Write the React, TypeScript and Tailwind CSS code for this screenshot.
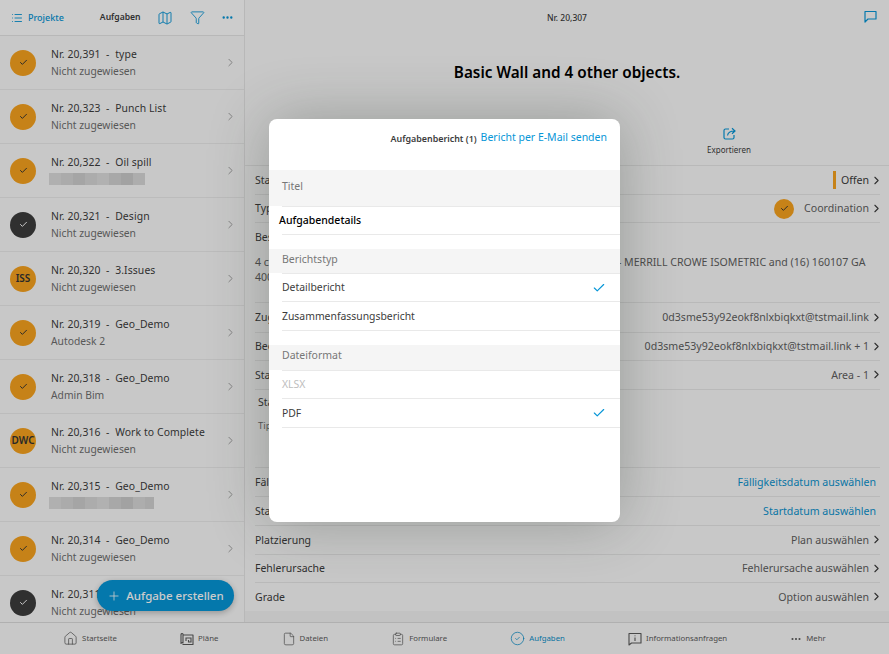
import React from "react";
import { ChevronRight, Check, House, File, ClipboardList, CircleCheck, Map, Funnel, Ellipsis, List, Plus } from "lucide-react";

const font = { fontFamily: '"Noto Sans", "Open Sans", sans-serif' };

type Task = { nr: string; name: string; sub?: string; badge: string; dark?: boolean; blur?: number };
const tasks: Task[] = [
  { nr: "20,391", name: "type", sub: "Nicht zugewiesen", badge: "check" },
  { nr: "20,323", name: "Punch List", sub: "Nicht zugewiesen", badge: "check" },
  { nr: "20,322", name: "Oil spill", badge: "check", blur: 96 },
  { nr: "20,321", name: "Design", sub: "Nicht zugewiesen", badge: "check", dark: true },
  { nr: "20,320", name: "3.Issues", sub: "Nicht zugewiesen", badge: "ISS" },
  { nr: "20,319", name: "Geo_Demo", sub: "Autodesk 2", badge: "check" },
  { nr: "20,318", name: "Geo_Demo", sub: "Admin Bim", badge: "check" },
  { nr: "20,316", name: "Work to Complete", sub: "Nicht zugewiesen", badge: "DWC" },
  { nr: "20,315", name: "Geo_Demo", badge: "check", blur: 105 },
  { nr: "20,314", name: "Geo_Demo", sub: "Nicht zugewiesen", badge: "check" },
  { nr: "20,311", name: "Geo_Demo", sub: "Nicht zugewiesen", badge: "check", dark: true },
];

function Mosaic({ width }: { width: number }) {
  const shades = ["bg-[#dcdcdc]", "bg-[#d6d6d6]", "bg-[#cfcfcf]", "bg-[#d8d8d8]", "bg-[#dedede]", "bg-[#d2d2d2]", "bg-[#cbcbcb]", "bg-[#d9d9d9]", "bg-[#d3d3d3]"];
  return (
    <div className="flex h-[12px] overflow-hidden" style={{ width }}>
      {shades.map((s, i) => (
        <div key={i} className={`${s} h-full w-[12px] shrink-0`} />
      ))}
    </div>
  );
}

function Badge({ t, size = "w-[26px] h-[26px]" }: { t: string; size?: string }) {
  return (
    <div className={`${size} rounded-full bg-[#f8a31f] flex items-center justify-center shrink-0 text-[10px] font-semibold text-[#333]`}>
      {t === "check" ? <Check className="w-[9px] h-[9px]" strokeWidth={2.6} /> : t}
    </div>
  );
}

function TaskRow({ task }: { task: Task }) {
  return (
    <div className="h-[54px] shrink-0 border-b border-[#ececec] flex items-center pl-[10px] pr-[7px] bg-[#fbfbfb]">
      {task.dark ? (
        <div className="w-[26px] h-[26px] rounded-full bg-[#3c3c3c] flex items-center justify-center shrink-0 text-white">
          <Check className="w-[9px] h-[9px]" strokeWidth={2.6} />
        </div>
      ) : (
        <Badge t={task.badge} />
      )}
      <div className="flex-1 ml-[15px] min-w-0">
        <div className="text-[10.4px] tracking-[0.1px] leading-[15px] text-[#3c3c3c] whitespace-pre">{`Nr. ${task.nr}  -  ${task.name}`}</div>
        <div className="mt-[2px] h-[15px] flex items-center">
          {task.blur ? (
            <div className="-ml-[2px]"><Mosaic width={task.blur} /></div>
          ) : (
            <span className="text-[10.3px] leading-[15px] text-[#6f6f6f]">{task.sub}</span>
          )}
        </div>
      </div>
      <ChevronRight className="w-[13px] h-[13px] text-[#a0a0a0]" strokeWidth={1.8} />
    </div>
  );
}

function DetailRow({ label, h, value, chevron = true, blue, strong, extra }: { label: string; h: string; value?: string; chevron?: boolean; blue?: boolean; strong?: boolean; extra?: React.ReactNode }) {
  return (
    <div className={`${h} shrink-0 border-b border-[#e8e8e8] flex items-center justify-between`}>
      <span className="text-[10.5px] pt-[1px] text-[#3c3c3c] whitespace-nowrap">{label}</span>
      <div className="flex items-center">
        {extra}
        {value && <span className={`text-[10.6px] pt-[1px] whitespace-nowrap ${blue ? "text-[#0b93cf]" : strong ? "text-[#3c3c3c]" : "text-[#5f5f5f]"}`}>{value}</span>}
        {chevron ? <ChevronRight className="w-[13px] h-[13px] ml-[1px] -mr-[3px] text-[#3c3c3c]" strokeWidth={2} /> : <span className="w-[4px]" />}
      </div>
    </div>
  );
}

function Tab({ icon, label, active }: { icon: React.ReactNode; label: string; active?: boolean }) {
  return (
    <div className={`flex items-center gap-[4px] ${active ? "text-[#0a8fca]" : "text-[#5a5a5a]"}`}>
      {icon}
      <span className="text-[7.8px] whitespace-nowrap">{label}</span>
    </div>
  );
}

function ModalBand({ label, h }: { label: string; h: string }) {
  return (
    <div className={`${h} bg-[#f5f5f5] flex items-center pl-[13px] pb-[3px]`}>
      <span className="text-[10.5px] text-[#777]">{label}</span>
    </div>
  );
}

function ModalRow({ label, h = "h-[29px]", checked, muted }: { label: string; h?: string; checked?: boolean; muted?: boolean }) {
  return (
    <div className={`ml-[13px] ${h} border-t border-[#e9e9e9] flex items-center justify-between pr-[14px]`}>
      <span className={`text-[10.4px] pt-[1px] ${muted ? "text-[#bdbdbd]" : "text-[#3c3c3c]"}`}>{label}</span>
      {checked && <Check className="w-[14px] h-[14px] text-[#0696d7]" strokeWidth={2} />}
    </div>
  );
}

export default function App() {
  return (
    <div className="relative w-[889px] h-[654px] overflow-hidden bg-white flex flex-col" style={font}>
      <div className="flex-1 flex min-h-0">
        <aside className="w-[245px] shrink-0 border-r border-[#e6e6e6] flex flex-col overflow-hidden">
          <div className="h-[36px] shrink-0 border-b border-[#e6e6e6] flex items-center pl-[11px] pr-[9px]">
            <List className="w-[12px] h-[12px] text-[#0696d7]" strokeWidth={1.8} />
            <span className="ml-[5px] text-[9px] font-medium text-[#0696d7]">Projekte</span>
            <span className="ml-[36px] text-[8.6px] font-semibold text-[#3c3c3c]">Aufgaben</span>
            <Map className="ml-[16px] w-[16px] h-[16px] text-[#0696d7]" strokeWidth={1.4} />
            <Funnel className="ml-[17px] w-[15px] h-[15px] text-[#0696d7]" strokeWidth={1.4} />
            <Ellipsis className="ml-[16px] w-[13px] h-[13px] text-[#0696d7]" strokeWidth={2.4} />
          </div>
          {tasks.map((t) => (
            <TaskRow key={t.nr} task={t} />
          ))}
        </aside>
        <main className="flex-1 min-w-0 flex flex-col bg-[#fbfbfb]">
          <div className="h-[36px] shrink-0 flex items-center relative justify-center">
            <span className="text-[8.5px] font-medium text-[#3c3c3c]">Nr. 20,307</span>
            <svg className="absolute right-[12px] top-[10px] w-[13px] h-[13px] text-[#0696d7]" viewBox="0 0 13 13" fill="none" stroke="currentColor" strokeWidth="1.2">
              <path d="M1 1.5h11v7.5H4L1 12z" strokeLinejoin="round" />
            </svg>
          </div>
          <div className="h-[72px] shrink-0 flex items-center justify-center">
            <h1 className="text-[15.3px] font-semibold text-black">Basic Wall and 4 other objects.</h1>
          </div>
          <div className="h-[57px] shrink-0 flex justify-end">
            <div className="w-[150px] mr-[85px] flex flex-col items-center pt-[19px]">
              <svg className="w-[13px] h-[13px] text-[#0696d7]" viewBox="0 0 13 13" fill="none" stroke="currentColor" strokeWidth="1.2">
                <path d="M6 2H2.5A1.5 1.5 0 0 0 1 3.5v7A1.5 1.5 0 0 0 2.5 12h7a1.5 1.5 0 0 0 1.5-1.5V8" />
                <path d="M4.5 8.5C5 5.5 7 4 11.5 4M9 1.3 12 4 9 6.7" />
              </svg>
              <span className="mt-[4px] text-[8px] text-[#3c3c3c]">Exportieren</span>
            </div>
          </div>
          <div className="pl-[10px] pr-[9px] border-t border-[#e8e8e8] flex flex-col flex-1 min-h-0">
            <DetailRow label="Status" h="h-[29px]" value="Offen" strong extra={<span className="w-[3px] h-[18px] bg-[#f8a31f] mr-[5px]" />} />
            <DetailRow label="Typ" h="h-[28px]" value="Coordination" extra={<div className="mr-[10px]"><Badge t="check" size="w-[20px] h-[20px]" /></div>} />
            <div className="h-[80px] shrink-0 border-b border-[#e8e8e8] pt-[7px]">
              <div className="text-[10.5px] leading-[15px] text-[#3c3c3c]">Beschreibung</div>
              <div className="mt-[10px] text-[10.6px] leading-[15px] text-[#5f5f5f] whitespace-nowrap">4 c<span className="inline-block w-[349px]" />- MERRILL CROWE ISOMETRIC and (16) 160107 GA</div>
              <div className="text-[10.6px] leading-[15px] text-[#5f5f5f]">400</div>
            </div>
            <DetailRow label="Zugewiesen" h="h-[30px]" value="0d3sme53y92eokf8nlxbiqkxt@tstmail.link" />
            <DetailRow label="Beobachter" h="h-[28px]" value="0d3sme53y92eokf8nlxbiqkxt@tstmail.link + 1" />
            <DetailRow label="Standort" h="h-[29px]" value="Area - 1" />
            <div className="h-[78px] shrink-0 border-b border-[#e8e8e8] pl-[3px] pt-[5px]">
              <div className="text-[10.5px] leading-[15px] text-[#3c3c3c]">Standort</div>
              <div className="mt-[8px] text-[9.5px] leading-[15px] text-[#6f6f6f]">Tippen</div>
            </div>
            <DetailRow label="Fälligkeitsdatum" h="h-[29px]" value="Fälligkeitsdatum auswählen" blue chevron={false} />
            <DetailRow label="Startdatum" h="h-[29px]" value="Startdatum auswählen" blue chevron={false} />
            <DetailRow label="Platzierung" h="h-[29px]" value="Plan auswählen" />
            <DetailRow label="Fehlerursache" h="h-[28px]" value="Fehlerursache auswählen" />
            <DetailRow label="Grade" h="h-[29px]" value="Option auswählen" />
          </div>
          <div className="h-[11px] shrink-0 bg-[#f3f3f3]" />
        </main>
      </div>
      <nav className="h-[32px] shrink-0 border-t border-[#dcdcdc] flex items-center justify-evenly bg-[#fbfbfb]">
        <Tab label="Startseite" icon={<House className="w-[15px] h-[15px]" strokeWidth={1.2} />} />
        <Tab label="Pläne" icon={
          <svg className="w-[14px] h-[14px]" viewBox="0 0 14 14" fill="none" stroke="currentColor" strokeWidth="1.1">
            <path d="M1 2.5C1 1.6 2.4 1.2 3 2v9c-.6-.6-2-.4-2 .5zM3 3h10v9.5H2.5" strokeLinejoin="round" />
            <path d="M6 9V6h5v4H8.5V8" />
          </svg>
        } />
        <Tab label="Dateien" icon={<File className="w-[14px] h-[14px]" strokeWidth={1.2} />} />
        <Tab label="Formulare" icon={<ClipboardList className="w-[14px] h-[14px]" strokeWidth={1.2} />} />
        <Tab active label="Aufgaben" icon={<CircleCheck className="w-[15px] h-[15px]" strokeWidth={1.2} />} />
        <Tab label="Informationsanfragen" icon={
          <svg className="w-[14px] h-[14px]" viewBox="0 0 14 14" fill="none" stroke="currentColor" strokeWidth="1.1">
            <path d="M1 1.5h12v9.5H3.5L1 13z" strokeLinejoin="round" />
            <path d="M7 3.5v.8M7 5.5V9" />
          </svg>
        } />
        <Tab label="Mehr" icon={<Ellipsis className="w-[12px] h-[12px]" strokeWidth={2.2} />} />
      </nav>

      <button className="absolute left-[97px] top-[580px] w-[137px] h-[31px] rounded-full bg-[#0696d7] text-white flex items-center justify-center gap-[5px] shadow-[0_2px_6px_rgba(0,0,0,0.25)]">
        <Plus className="w-[14px] h-[14px]" strokeWidth={1.4} />
        <span className="text-[11.5px] font-medium">Aufgabe erstellen</span>
      </button>

      <div className="absolute inset-0 bg-black/20" />

      <div className="absolute left-[269px] top-[119px] w-[351px] h-[403px] rounded-[8px] bg-white overflow-hidden shadow-[0_0_60px_rgba(40,50,40,0.3)]">
        <div className="h-[51px] pt-[11px] pr-[13px] flex items-start justify-end">
          <span className="text-[8.9px] font-semibold text-[#3c3c3c] mt-[2px] mr-[4px]">Aufgabenbericht (1)</span>
          <span className="text-[10.5px] text-[#0696d7]">Bericht per E-Mail senden</span>
        </div>
        <ModalBand label="Titel" h="h-[36px]" />
        <div className="h-[29px] ml-[13px] border-t border-b border-[#e9e9e9] flex items-center">
          <span className="-ml-[3px] text-[10.5px] font-medium text-black">Aufgabendetails</span>
        </div>
        <div className="h-[14px]" />
        <ModalBand label="Berichtstyp" h="h-[24px]" />
        <ModalRow label="Detailbericht" h="h-[28px]" checked />
        <ModalRow label="Zusammenfassungsbericht" />
        <div className="ml-[13px] h-[15px] border-t border-[#e9e9e9]" />
        <ModalBand label="Dateiformat" h="h-[25px]" />
        <ModalRow label="XLSX" h="h-[28px]" muted />
        <ModalRow label="PDF" checked />
        <div className="ml-[13px] border-t border-[#e9e9e9]" />
      </div>
    </div>
  );
}
